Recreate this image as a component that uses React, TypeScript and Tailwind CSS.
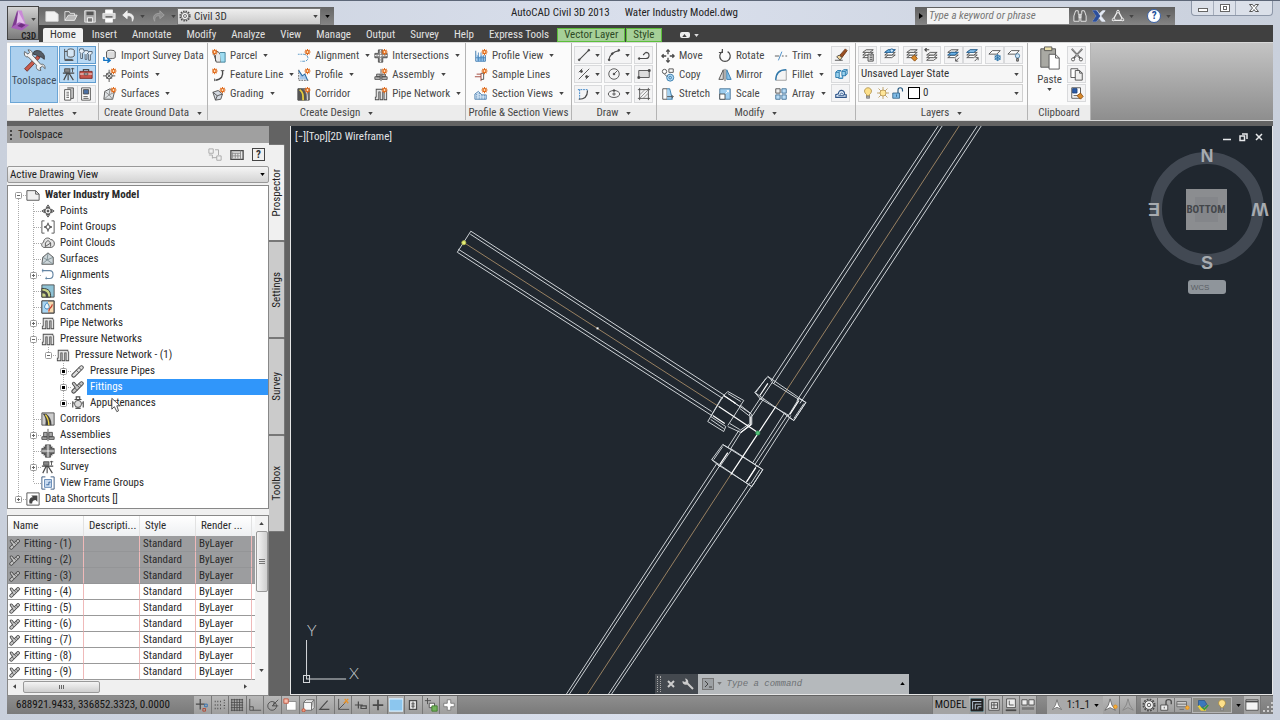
import { useState, type ReactNode } from "react";
import clsx from "clsx";

const spark = (
  <g stroke="#e06a1c" strokeWidth="1.200">
    <path d="M12 0v7M8.500 3.500h7M9.500 1l5 5M14.500 1l-5 5" />
    <circle cx="12" cy="3.500" r="1.700" fill="#ffe9c4" />
  </g>
);

const pipePair = (
  <>
    <path d="M1 13h3V4h10M8.500 4v11M13 4v11" stroke="#4a4a4a" strokeWidth="4" />
    <path d="M2 13h2V4h9M8.500 4v10M13 4v10" stroke="#e2e2e2" strokeWidth="2" />
  </>
);

const fittingShape = (
  <>
    <path d="m3 13 9-9" stroke="#444" strokeWidth="5" strokeLinecap="round" />
    <path d="m3 4 4 5" stroke="#444" strokeWidth="4" strokeLinecap="round" />
    <path d="m3 13 9-9" stroke="#c4c4c4" strokeWidth="3" strokeLinecap="round" />
    <path d="m3 4 4 5" stroke="#c4c4c4" strokeWidth="2" strokeLinecap="round" />
    <path d="m9 4 3 3M4 9l3 3M7 6l3 3" />
  </>
);

const layerStack = (
  <>
    <path d="m2 11 4-3h8l-4 3z" fill="#fff" />
    <path d="m2 8 4-3h8l-4 3z" fill="#fff" />
    <path d="m2 5 4-3h8l-4 3z" fill="#eee" />
  </>
);

const icons: Record<string, ReactNode> = {
  import: (
    <>
      <ellipse cx="9" cy="3.500" rx="5" ry="2.200" fill="#eee" />
      <path d="M4 3.500v6c0 2 10 2 10 0v-6" fill="#dcdcdc" />
      <path d="M1 9v4h6M5 10.500l3 2.500-3 2.500" stroke="#1374c4" strokeWidth="1.700" />
    </>
  ),
  pointsNew: (
    <>
      <circle cx="7" cy="9" r="3.500" fill="#ddd" />
      <path d="M7 2v4M7 12v4M0 9h4M10 9h4M4 6l6 6M10 6l-6 6" />
      {spark}
    </>
  ),
  surfaceNew: (
    <>
      <path d="m1 14 1-9 6-3 5 4-2 8z" fill="#dfe3e6" />
      <path d="m2 5 5 4 1-7M7 9l6-3M7 9l4 5M7 9l-6 5" stroke="#888" />
      {spark}
    </>
  ),
  parcel: (
    <>
      <path d="M1 3h6l3 4v8H5z" fill="#e8e8e8" />
      <path d="M9 4h6v11h-5" fill="#9edcf1" stroke="#3b7a94" />
      <path d="M4 7v7" />
      <g transform="translate(-9)">{spark}</g>
    </>
  ),
  featureLine: (
    <>
      <path d="M12 3c1 6-1 10-8 11" strokeWidth="1.600" />
      <path d="M10 3h4M3 12v3" />
      <g transform="translate(-9)">{spark}</g>
    </>
  ),
  grading: (
    <>
      <path d="M1 6 7 4l5 4-2 6-6 1z" fill="#d5dae2" />
      <path d="m1 6 5 4 6-2M6 10l-2 5" />
      {spark}
    </>
  ),
  alignment: (
    <>
      <path d="M1 6h7" stroke="#4a90c2" strokeDasharray="2 1" />
      <path d="M8 6c6 1 6 8 0 8H4" stroke="#4a90c2" strokeDasharray="3 1" />
      {spark}
    </>
  ),
  profile: (
    <>
      <path d="M2 2v12h12" strokeDasharray="2 1" />
      <path d="M3 6v7h8L9 8 6 10z" fill="#a6c8ec" stroke="none" />
      <path d="M2 3 6 9l3-2 3 7" stroke="#2b6da8" strokeWidth="1.300" />
      {spark}
    </>
  ),
  corridor: (
    <>
      <path d="M1 2h13v13H1z" fill="#777" />
      <path d="M1 2h4c5 2 6 6 5 13H1z" fill="#555" stroke="none" />
      <path d="M3 3c4 3 4 6 4 12" stroke="#e8cf3c" strokeWidth="2" />
      <path d="M9 3c3 3 3 7 3 12" stroke="#ddd" />
      {spark}
    </>
  ),
  intersection: (
    <>
      <path d="M5 1h5v4h5v5h-5v5H5v-5H1V5h4z" fill="#8a8a8a" />
      <path d="M7.500 1v14M1 7.500h14" stroke="#fff" strokeDasharray="2 1" />
      {spark}
    </>
  ),
  assembly: (
    <>
      <path d="M8 1v14" />
      <path d="M1 10h6v3H1zM9 10h6v3H9zM3 7h4v3H3zM9 7h4v3H9z" fill="#bbb" />
      {spark}
    </>
  ),
  pipeNew: (
    <>
      {pipePair}
      {spark}
    </>
  ),
  profileView: (
    <>
      <path d="M2 2v12h11V7" stroke="#2f6ea6" />
      <path d="M3 6l3 3 3-2 3 2v5H3z" fill="#86b9e6" stroke="none" />
      <path d="M5 4v10M8 4v10M11 7v7M2 10h11" stroke="#4a84b8" />
      {spark}
    </>
  ),
  sampleLine: (
    <>
      <path d="M1 10h7v5M8 10V6M3 7h5" stroke="#9b3b2f" />
      <path d="M8 6h3v7H8" />
      {spark}
    </>
  ),
  sectionView: (
    <>
      <path d="M1 14V8l4-3 4 4h5v5z" fill="#cfe2f3" stroke="#4d7fae" />
      <path d="M3 8v6M6 7v7M9 9v5M12 9v5" stroke="#4d7fae" strokeDasharray="1 1" />
      {spark}
    </>
  ),
  line: (
    <>
      <path d="M3 13 13 3" strokeWidth="1.300" />
      <circle cx="2.500" cy="13.500" r="1" fill="#444" />
      <circle cx="13.500" cy="2.500" r="1" fill="#444" />
    </>
  ),
  arc: (
    <>
      <path d="M2 14C3 8 7 4 14 3" strokeWidth="1.300" />
      <circle cx="2.500" cy="13.500" r="1" fill="#444" />
      <circle cx="6" cy="6.500" r="1" fill="#444" />
      <circle cx="13.500" cy="2.500" r="1" fill="#444" />
    </>
  ),
  polyline: (
    <>
      <path d="M2 12h8c5 0 5-7 0-7M10 5l-3 3" strokeWidth="1.300" />
      <circle cx="2.500" cy="12" r="1" fill="#444" />
    </>
  ),
  percent: (
    <>
      <path d="M2 14 14 2M2 6l4-4M10 14l4-4" />
      <circle cx="5" cy="5" r="1.200" fill="#444" />
      <circle cx="11" cy="11" r="1.200" fill="#444" />
    </>
  ),
  circle: (
    <>
      <circle cx="8" cy="8" r="6" />
      <path d="m8 8 4-4" />
      <circle cx="8" cy="8" r="1" fill="#444" />
    </>
  ),
  rect: (
    <>
      <path d="M2 4h12v8H2z" fill="#ddd" />
      <path d="M1 11h2v2H1zM13 3h2v2h-2z" fill="#444" />
    </>
  ),
  curve: (
    <>
      <path d="M1 3h11v3M3 3v11" stroke="#2b7bc4" strokeDasharray="2 1" />
      <path d="M2 14c7 0 10-3 10-10" strokeWidth="1.400" />
    </>
  ),
  ellipse: (
    <>
      <ellipse cx="8" cy="8" rx="6.500" ry="4" />
      <path d="M8 6v4M6 8h4" />
      <circle cx="8" cy="4" r="1" fill="#444" />
    </>
  ),
  hatch: (
    <>
      <path d="M3 1v14M13 1v14M1 3h14M1 13h14" />
      <path d="m3 9 6-6M3 13 13 3M7 13l6-6" stroke="#888" />
    </>
  ),
  move: (
    <path d="M8 1v5M8 10v5M1 8h5M10 8h5M6 3l2-2 2 2M6 13l2 2 2-2M3 6 1 8l2 2M13 6l2 2-2 2" strokeWidth="1.500" />
  ),
  copy: (
    <>
      <circle cx="4" cy="4" r="2.500" fill="#fff" />
      <circle cx="10.500" cy="11" r="4" fill="#b9dcf5" stroke="#2e76a8" />
      <circle cx="10.500" cy="11" r="1.500" stroke="#2e76a8" />
      <path d="M9 1h5v4H9z" />
      <path d="m4 7 3 3" />
    </>
  ),
  stretch: (
    <>
      <path d="M2 2h5v12H2z" fill="#fff" />
      <path d="M7 2h3l3 12H7" fill="#a8d4f2" stroke="#2e76a8" />
      <path d="M7 11h7M12 9l2 2-2 2" />
    </>
  ),
  rotate: <path d="M11 3a6 6 0 1 1-6 0M5 0v4H1" strokeWidth="1.400" />,
  mirror: (
    <>
      <path d="M6 2v11H1z" fill="#ddd" />
      <path d="M10 2v11h5z" fill="#8cc4ec" stroke="#2e76a8" />
      <path d="M8 1v14" />
    </>
  ),
  scale: (
    <>
      <path d="M2 2h12v12H2z" fill="#9dcdf0" stroke="#4a7698" />
      <path d="M2 8h6v6H2z" fill="#fff" />
      <path d="m9 7 3-3M10 4h2v2" stroke="#fff" />
    </>
  ),
  trim: (
    <>
      <path d="M1 8h5M9 8h2M13 8h2" />
      <path d="M5 13 9 3" stroke="#3a86c6" />
    </>
  ),
  fillet: (
    <>
      <path d="M2 14C2 6 6 2 14 2v12z" fill="#f4f4f4" stroke="none" />
      <path d="M14 2v12H2" stroke="#999" />
      <path d="M2 14C2 6 6 2 14 2" stroke="#2e76a8" strokeWidth="1.500" />
    </>
  ),
  array: (
    <>
      <path d="M2 2h5v5H2z" fill="#eee" />
      <path d="M9 2h5v5H9zM2 9h5v5H2zM9 9h5v5H9z" fill="#b9dcf5" stroke="#3c6d92" />
    </>
  ),
  erase: (
    <>
      <path d="m6 9 7-8 2 2-6 8z" fill="#9a4f22" stroke="#6b3718" />
      <path d="m3 10 3-2 3 3-2 3z" fill="#f1d49a" />
      <path d="M1 14h9" />
    </>
  ),
  explode: (
    <path d="M2 6h4v6H2zM2 6l2-2h4L6 6M9 5h4v5H9zM9 5l2-2h4l-2 2M13 10l2-2V3M5 13h5v-3" fill="#9bd3ef" stroke="#2273a8" />
  ),
  offset: (
    <>
      <path d="M2 13h12v-3h-2c1-6-7-7-7-1l-3 1z" fill="#dbe9f6" stroke="#30568a" strokeWidth="1.300" />
      <path d="M5 11h6c0-3-4-4-4-1" stroke="#30568a" />
    </>
  ),
  layerProps: (
    <>
      {layerStack}
      <path d="M8 7h6v8H8z" fill="#ddd" />
      <path d="M10 9h3M10 11h3M10 13h3" />
    </>
  ),
  layerOn: (
    <>
      {layerStack}
      <path d="m2 5 4-3h8l-4 3z" fill="#6db4e8" stroke="#22659c" />
      <circle cx="10" cy="3" r="2" fill="#cde6f9" stroke="#22659c" />
    </>
  ),
  layerMatch: (
    <>
      {layerStack}
      <path d="m7 11 4-3 3 4-3 3z" fill="#d98a2b" stroke="#8c4f14" />
    </>
  ),
  layerPrev: (
    <>
      <g transform="translate(1 3)">{layerStack}</g>
      <path d="M6 2H1M3 0 1 2l2 2" strokeWidth="1.300" />
    </>
  ),
  layerIso: (
    <>
      {layerStack}
      <path d="m2 8 4-3h8l-4 3z" fill="#6db4e8" stroke="#22659c" />
      <path d="m15 11-4 4M11 12v3h3" />
    </>
  ),
  layerUniso: (
    <>
      {layerStack}
      <path d="m2 5 4-3h8l-4 3z" fill="#8fc4ec" stroke="#22659c" />
      <path d="m11 15 4-4M12 11h3v3" />
    </>
  ),
  layerFreeze: (
    <>
      <path d="m1 7 4-4h9l-4 4z" fill="#fff" />
      <circle cx="11" cy="11" r="3" fill="#b7dcf5" stroke="#2a70a5" />
      <path d="M11 7v8M7.500 9l7 4M14.500 9l-7 4" stroke="#2a70a5" />
    </>
  ),
  layerOff: (
    <>
      <path d="m1 7 4-4h9l-4 4z" fill="#fff" />
      <circle cx="12" cy="9" r="2.500" fill="#cfe4f5" stroke="#4a7ba0" />
      <path d="M11 12h2v3h-2z" fill="#aaa" />
    </>
  ),
  bulb: (
    <>
      <path d="M6 10C1 6 4 1 8 1s7 5 2 9v2H6z" fill="#fde08a" stroke="#a8883c" />
      <path d="M6 12h4v3H6z" fill="#aaa" stroke="#777" />
    </>
  ),
  sun: (
    <>
      <path d="M8 0v16M0 8h16M2 2l12 12M14 2 2 14" stroke="#b08e4a" />
      <circle cx="8" cy="8" r="4" fill="#ffe698" stroke="#b08e4a" />
    </>
  ),
  unlock: (
    <>
      <path d="M1 8h9v7H1z" fill="#7fbbe6" stroke="#24577f" />
      <path d="M8 8V4c0-4 6-4 6 0v2" stroke="#24577f" strokeWidth="1.500" />
      <path d="M6 10v3" stroke="#24577f" />
    </>
  ),
  cut: (
    <>
      <path d="m2 1 10 11M14 1 4 12" stroke="#555" strokeWidth="2" />
      <path d="m2 1 8 9M14 1l-8 9" stroke="#ddd" strokeWidth="0.700" />
      <circle cx="3.500" cy="13" r="1.800" fill="#fff" />
      <circle cx="12.500" cy="13" r="1.800" fill="#fff" />
    </>
  ),
  pages: (
    <>
      <path d="M1 2h8v10H1z" fill="#fff" />
      <path d="M6 4h5l3 3v8H6z" fill="#eee" />
      <path d="M11 4v3h3" />
    </>
  ),
  matchProps: (
    <>
      <path d="M2 2h10v12H2z" fill="#fff" />
      <path d="M3 3h5v5H3z" fill="#2a5ba8" stroke="#1f447e" />
      <path d="M4 11h5" />
      <path d="m8 11 4-3 3 4-3 3z" fill="#d98a2b" stroke="#8c4f14" />
    </>
  ),
  prospector: (
    <>
      <path d="M3 1v12h9M3 4h3" />
      <ellipse cx="10" cy="3" rx="4" ry="2" fill="#d5e6f5" />
      <path d="M6 3v6c1 2 7 2 8 0V3" fill="#d5e6f5" />
      <path d="M3 14h10" strokeWidth="1.500" />
    </>
  ),
  settings: (
    <path d="M1 1h4l1 3-2 2v6H2V6L0 4zM6 3h4l1 2-2 2v6H7V7M11 4h4v2l-2 2v6h-2V7" fill="#e8f0f8" stroke="#4a5a6a" />
  ),
  tripod: (
    <>
      <path d="M3 2h6v4H3z" fill="#888" />
      <path d="M1 7h13M6 7 2 15M7 7v8M8 7l5 8" strokeWidth="1.300" />
      <path d="M10 2h4M12 1v5" />
    </>
  ),
  toolbox: (
    <>
      <path d="M5 5V3h6v2" strokeWidth="1.400" />
      <path d="M1 5h14v8H1z" fill="#c7544c" stroke="#7c2b26" />
      <path d="M1 8h14" stroke="#fff" />
      <path d="M6 7h4v2H6z" fill="#eee" />
    </>
  ),
  calc: (
    <>
      <path d="M6 1h7v12h-3" fill="#ccc" />
      <path d="M3 3h7v12H3z" fill="#fff" />
      <path d="M5 6h3M5 8h3M5 10h3M5 12h3" stroke="#666" />
    </>
  ),
  sheet: (
    <>
      <path d="M3 1h10v14H3z" fill="#fff" />
      <path d="M5 3h6v5H5z" fill="#4a6fa3" />
      <path d="M5 11h5M5 13h6" />
    </>
  ),
  newFile: <path d="M1 3h10l4 3v8H1z" fill="#f2f2f2" stroke="#ddd" />,
  open: (
    <>
      <path d="M1 13V3h5l1 2h5v3" stroke="#e8e8e8" />
      <path d="m1 13 4-6h10l-3 6z" fill="#b8b8b8" stroke="#eee" />
    </>
  ),
  save: (
    <>
      <path d="M2 2h12v13H2z" fill="#aaa" stroke="#eee" />
      <path d="M4 3h8v4H4z" fill="#555" stroke="none" />
      <path d="M5 10h6v5H5z" fill="#777" stroke="#fff" />
    </>
  ),
  print: (
    <>
      <path d="M4 1h8v4H4zM4 10h8v5H4z" fill="#fff" stroke="#eee" />
      <path d="M1 5h14v6H1z" fill="#d5d5d5" stroke="#eee" />
      <path d="M4 9h8" stroke="#555" strokeWidth="1.500" />
    </>
  ),
  undo: <path d="M7 2 2 7l5 4V8c4-1 6 1 6 6 3-6 0-9-6-9z" fill="#eee" stroke="#eee" />,
  redo: <path d="m9 2 5 5-5 4V8c-4-1-6 1-6 6-3-6 0-9 6-9z" fill="#8d8d8d" stroke="#a2a2a2" />,
  gear: (
    <>
      <circle cx="8" cy="8" r="6.500" strokeDasharray="2 1.400" strokeWidth="2" />
      <circle cx="8" cy="8" r="5" fill="#f2f2f2" />
      <circle cx="8" cy="8" r="2" />
    </>
  ),
  binoculars: (
    <path d="M3 2h3v3l1 2v7H1V8zM10 2h3l2 6v6H9V7l1-2zM7 6h2v4H7z" fill="#666" stroke="#f0f0f0" />
  ),
  exchange: (
    <>
      <path d="M1 2h5l2 4 4-4h3l-5 6 5 6h-4l-3-4-3 4H1l4-6z" fill="#e7edf7" stroke="#dfe6f2" />
      <path d="M1 2h4l4 6-4 6H1l4-6z" fill="#2b4e9b" stroke="#2b4e9b" />
    </>
  ),
  autodesk360: (
    <>
      <path d="m8 2 6 11H2z" stroke="#eee" strokeWidth="1.500" />
      <circle cx="8" cy="3" r="1.500" fill="#888" stroke="#eee" />
      <circle cx="3" cy="12" r="1.500" fill="#888" stroke="#eee" />
      <circle cx="13" cy="12" r="1.500" fill="#888" stroke="#eee" />
    </>
  ),
  doc: (
    <>
      <path d="M1 3h10l4 4v7H1z" fill="#f0f0f0" />
      <path d="M11 3v4h4" />
    </>
  ),
  point: (
    <>
      <circle cx="8" cy="8" r="3.500" fill="#eee" />
      <path d="m8 1 2 3H6zM8 15l2-3H6zM1 8l3-2v4zM15 8l-3-2v4z" fill="#bbb" />
      <circle cx="8" cy="8" r="1" fill="#444" />
    </>
  ),
  pointGroup: (
    <>
      <path d="M4 1H1v14h3M12 1h3v14h-3" />
      <circle cx="8" cy="8" r="2.500" />
      <path d="M8 3v3M8 10v3M3.500 8h3M9.500 8h3" strokeWidth="1.500" />
    </>
  ),
  pointCloud: (
    <>
      <path d="M3 13C0 12 0 8 3 7c0-5 6-6 8-3 5 0 6 8 1 9z" fill="#e5e5e5" />
      <path d="M5 12V8l3-3 3 3-3 2zM11 8v4" />
    </>
  ),
  surface: (
    <>
      <path d="m1 14 1-8 6-5 6 5v8z" fill="#cdd6da" />
      <path d="m8 1-1 8-6 5M7 9l7-3M7 9l7 5M2 6l5 3" stroke="#7b8b90" />
    </>
  ),
  alignmentRow: (
    <>
      <path d="M1 3h9c5 0 5 9 0 9H5" stroke="#6485a3" strokeWidth="1.300" />
      <path d="M2 1v4M6 10v3" stroke="#6485a3" />
    </>
  ),
  site: (
    <>
      <path d="M1 1h14v14H1z" fill="#8fc3d6" />
      <path d="M1 5c9 0 10 4 10 10H1z" fill="#c9d487" stroke="#333" />
      <path d="M1 9c5 0 6 2 6 6" strokeWidth="3" />
    </>
  ),
  catchment: (
    <>
      <path d="M1 1h14v14H1z" fill="#f5d9ae" />
      <path d="M1 1h7v14H1z" fill="#a8d5f2" stroke="none" />
      <path d="M7 3c-6 6-1 8 1 7s2-3-1-7z" fill="#e7f6ff" stroke="#2a76b4" />
      <path d="M9 13c0-5 3-3 4-8" stroke="#c43d2e" strokeWidth="1.400" />
      <path d="M1 1h14v14H1z" />
    </>
  ),
  pipes: pipePair,
  pressurePipe: (
    <>
      <path d="m3 13 9-9" stroke="#444" strokeWidth="5" strokeLinecap="round" />
      <path d="m3 13 9-9" stroke="#ddd" strokeWidth="3" strokeLinecap="round" />
      <path d="m6 7 3 3M9 4l3 3" />
    </>
  ),
  fitting: fittingShape,
  appurtenance: (
    <>
      <path d="M4 4h8M6 1h4v3H6zM2 6v7M14 6v7M2 8h2M12 8h2" strokeWidth="1.300" />
      <circle cx="8" cy="9" r="4" fill="#ddd" />
      <path d="M5 14h6" strokeWidth="1.500" />
    </>
  ),
  corridorRow: (
    <>
      <path d="M1 1h14v14H1z" fill="#ccc" />
      <path d="M2 2h4c4 3 6 7 6 13H5C6 9 5 5 2 2z" fill="#444" stroke="none" />
      <path d="M5 3c3 4 4 7 4 12" stroke="#f0d642" strokeWidth="1.500" />
    </>
  ),
  assemblyRow: (
    <>
      <path d="M8 1v14" />
      <path d="M1 10h6v3H1zM9 10h6v3H9zM3 5h4v5H3zM9 5h4v5H9z" fill="#aaa" />
    </>
  ),
  intersectionRow: (
    <>
      <path d="M5 1h6v4h4v6h-4v4H5v-4H1V5h4z" fill="#777" />
      <path d="M8 1v14M1 8h14" stroke="#fff" />
      <path d="m3 3 2 2M13 3l-2 2M3 13l2-2M13 13l-2-2" strokeWidth="1.500" />
    </>
  ),
  viewFrame: (
    <>
      <path d="M5 1H1v14h4M11 1h4v14h-4" stroke="#2f4f78" />
      <path d="M4 4h8v9H4z" fill="#c7daf0" stroke="#5c83b3" />
      <path d="M6 10h3V7h2" stroke="#2f5d94" />
    </>
  ),
  shortcut: (
    <>
      <path d="M1 1h14v14H1z" fill="#fff" />
      <path d="M4 13c-1-5 1-7 4-7L6 4h7v7l-2-2c-2 0-4 1-4 4z" fill="#444" stroke="none" />
    </>
  ),
  infer: (
    <>
      <path d="M6 1v12M1 7h10" strokeWidth="1.500" />
      <path d="M11 7h3v3h-3z" stroke="#2f6fb0" />
      <path d="M9 12h3v3H9z" stroke="#b5452f" />
    </>
  ),
  snap: <path d="M2 4h9M2 8h9M2 12h9M13 2v12" strokeDasharray="1 2" strokeWidth="1.500" />,
  grid: <path d="M2 1v14M5 1v14M8 1v14M11 1v14M14 1v14M1 2h14M1 5h14M1 8h14M1 11h14M1 14h14" />,
  ortho: <path d="M2 1v13h13M2 10h4v4" />,
  polar: (
    <>
      <circle cx="7" cy="9" r="5" />
      <path d="m7 9 7-7M7 9h7M9 5v4" />
    </>
  ),
  osnap: (
    <>
      <path d="M4 4h11v10H4z" fill="#fff" stroke="#888" />
      <path d="M1 1h5v5H1z" fill="#f6c0b0" stroke="#c4523c" />
    </>
  ),
  osnap3d: (
    <>
      <path d="M3 5h9v9H3zM3 5l3-3h9l-3 3M15 2v9l-3 3" fill="#f8f8f8" stroke="#666" />
      <circle cx="3" cy="14" r="1.800" fill="#f09a7c" stroke="#c4523c" />
    </>
  ),
  otrack: <path d="M11 3 2 13h11" strokeWidth="1.300" />,
  ducs: (
    <>
      <path d="M3 1v12h12M3 13l8-8" />
      <path d="M9 6l5-5M10 1l4 5" stroke="#e7932a" strokeWidth="1.500" />
    </>
  ),
  dyn: <path d="M1 8h9M5 4v8M8 9h6v3H8z" strokeWidth="1.400" />,
  lwt: <path d="M8 2v12M2 8h12" strokeWidth="2" />,
  tpy: <path d="M0 1h16v14H0z" fill="#8cc6ee" stroke="#d9f0ff" strokeWidth="1.500" />,
  quickProps: (
    <>
      <path d="M4 3h8v10H4z" fill="#fff" strokeWidth="1.500" />
      <path d="M6 6h4M6 8h4M6 10h4M8 4v8" />
    </>
  ),
  cycling: (
    <>
      <path d="M4 0v7M1 3h7M6 6h6v5H6z" fill="#fff" />
      <path d="M9 9h6v6H9z" fill="#72b35b" stroke="#3e7a2b" />
    </>
  ),
  plus: <path d="M6 2h4v4h4v4h-4v4H6v-4H2V6h4z" fill="#fff" stroke="#777" />,
  model: (
    <>
      <path d="M0 0h16v16H0z" fill="#222" stroke="#a9dbe8" />
      <path d="M3 13V4h10M6 13V7h7M9 13v-3h4" stroke="#cde" />
    </>
  ),
  layout: (
    <>
      <path d="M2 2h12v12H2z" fill="#ddd" />
      <path d="M5 5h7v7H5zM5 8h7M8 5v7" />
    </>
  ),
  quickLayout: (
    <>
      <path d="M3 1h10v10H3z" fill="#eee" />
      <path d="M2 14h12" strokeWidth="2" />
      <path d="M6 3v5h5" />
    </>
  ),
  quickDrawing: (
    <>
      <path d="M1 2h6v6H1zM9 2h6v6H9z" fill="#eee" />
      <path d="M1 12h14" strokeWidth="3" stroke="#777" />
    </>
  ),
  scaleA: <path d="m8 1 2 7 4 6-6-3-6 3 4-6z" fill="#fff" stroke="#666" />,
  scaleSpark: (
    <>
      <path d="m7 1 2 7 4 6-6-3-6 3 4-6z" fill="#fff" stroke="#666" />
      <circle cx="13" cy="10" r="2" fill="#f4b13c" stroke="#e58f1f" />
    </>
  ),
  scaleDim: <path d="m8 1 2 7 4 6-6-3-6 3 4-6z" fill="#aaa" stroke="#858585" />,
  lockOpen: (
    <>
      <path d="M2 8h8v6H2z" fill="#eee" />
      <path d="M8 8V4c0-3 6-3 6 0v3" strokeWidth="1.500" />
      <path d="M6 10v2" />
    </>
  ),
  hardware: (
    <>
      <path d="M1 4h11v6H1z" fill="#ccc" stroke="#666" />
      <path d="M1 7h11M4 13h5" stroke="#666" />
      <circle cx="13" cy="11" r="2" fill="#f4b13c" stroke="#e58f1f" />
    </>
  ),
  tray: (
    <>
      <path d="M2 2h8l3 5-5 4H2z" fill="#3b78bd" stroke="#28538a" />
      <path d="m2 9 4 5h6" stroke="#efd13a" strokeWidth="3" />
      <path d="m7 11 3 3 5-6" stroke="#2f9b41" strokeWidth="2" />
    </>
  ),
  window: (
    <>
      <path d="M1 2h14v12H1z" fill="#f4f4f4" />
      <path d="M1 4h14" strokeWidth="2" />
    </>
  ),
  panorama: (
    <>
      <path d="M1 3h14v10H1z" fill="#e6e6e6" strokeWidth="1.500" />
      <path d="M3 5v7M1 6h11M1 9h11M12 3v10M6 6v6M9 6v6" stroke="#888" />
    </>
  ),
  treeToggle: (
    <path d="M1 1h5v5H1zM1 8h4v4M10 9h5v5h-5zM5 11h5M8 2h4v6" stroke="#a5a5a5" />
  ),
};

function Icon({ name, size = "md" }: { name: string; size?: "sm" | "md" }) {
  return (
    <svg
      viewBox="0 0 16 16"
      fill="none"
      stroke="#4a4a4a"
      strokeWidth="1"
      aria-hidden="true"
      className={clsx("shrink-0", size === "sm" ? "h-3 w-3" : "h-3.5 w-3.5")}
    >
      {icons[name]}
    </svg>
  );
}

function Caret({ className }: { className?: string }) {
  return (
    <svg viewBox="0 0 6 4" aria-hidden="true" className={clsx("h-[3px] w-[5px] shrink-0", className ?? "fill-[#444]")}>
      <path d="M0 0h6L3 4z" />
    </svg>
  );
}

function Tool({ icon, label, menu }: { icon: string; label: string; menu?: boolean }) {
  return (
    <button type="button" className="flex h-[19px] items-center gap-1 whitespace-nowrap text-[#484848]">
      <Icon name={icon} />
      {label}
      {menu ? <Caret className="ml-0.5 fill-[#444]" /> : null}
    </button>
  );
}

function SmallButton({ icon, label, active, menu }: { icon: string; label: string; active?: boolean; menu?: boolean }) {
  return (
    <button
      type="button"
      aria-label={label}
      className={clsx(
        "flex h-[18px] items-center justify-center border",
        menu ? "w-7 gap-1" : "w-[19px]",
        active ? "border-[#5f9ccf] bg-[#b9d9f4]" : "border-[#d9dadc] bg-[#f4f4f5]",
      )}
    >
      <Icon name={icon} />
      {menu ? <Caret /> : null}
    </button>
  );
}

function Panel({ title, menu, className, children }: { title: string; menu?: boolean; className?: string; children: ReactNode }) {
  return (
    <section className={clsx("flex shrink-0 flex-col border-r border-[#b4b4b4] bg-[#fbfbfb]", className)}>
      <div className="flex h-[62px] gap-1 px-1 pt-[3px]">{children}</div>
      <h2 className="flex h-[15px] items-center justify-center gap-1.5 whitespace-nowrap bg-[#ececec] text-[#484848]">
        {title}
        {menu ? <Caret className="mt-px ml-0.5 fill-[#444]" /> : null}
      </h2>
    </section>
  );
}

const tabs = ["Home", "Insert", "Annotate", "Modify", "Analyze", "View", "Manage", "Output", "Survey", "Help", "Express Tools"];

function TitleBar() {
  return (
    <div className="flex h-[25px] items-end">
      <div className="flex h-[18px] w-[295px] shrink-0 items-center bg-linear-to-b from-[#666] to-[#858585] pl-1.5">
        <div className="flex flex-1 items-center gap-[5px]">
          {["newFile", "open", "save", "print", "undo"].map((name) => (
            <button key={name} type="button" aria-label={name}>
              <Icon name={name} />
            </button>
          ))}
          <Caret />
          <button type="button" aria-label="redo" className="ml-0.5">
            <Icon name="redo" />
          </button>
          <Caret />
        </div>
        <div className="relative h-[17px] w-[144px]">
          <select aria-label="Workspace" className="h-full w-full appearance-none border border-[#777] bg-linear-to-b from-[#eee] to-[#ccc] pl-4 text-[#333]">
            <option>Civil 3D</option>
          </select>
          <span className="pointer-events-none absolute top-[2px] left-[2px]">
            <Icon name="gear" size="sm" />
          </span>
          <Caret className="pointer-events-none absolute top-[7px] right-[3px] fill-[#444]" />
        </div>
        <button type="button" aria-label="Customize toolbar" className="flex h-full w-[13px] items-center justify-center">
          <Caret className="fill-black" />
        </button>
      </div>
      <h1 className="flex h-6 flex-1 items-center justify-center gap-[15px] text-[#222]">
        <span>AutoCAD Civil 3D 2013</span>
        <span>Water Industry Model.dwg</span>
      </h1>
      <div className="flex h-[18px] w-[260px] shrink-0 items-center bg-linear-to-b from-[#606060] to-[#858585]">
        <button type="button" aria-label="Collapse search" className="flex w-3 items-center justify-center">
          <svg viewBox="0 0 4 6" className="h-1.5 w-1">
            <path d="M0 0v6l4-3z" />
          </svg>
        </button>
        <input
          type="text"
          aria-label="Search help"
          placeholder="Type a keyword or phrase"
          className="h-4 w-[142px] bg-[#f3f3f3] px-0.5 italic placeholder:text-[#777]"
        />
        <div className="flex flex-1 items-center justify-between px-1">
          <button type="button" aria-label="Find">
            <Icon name="binoculars" />
          </button>
          <button type="button" aria-label="Exchange">
            <Icon name="exchange" />
          </button>
          <button type="button" aria-label="Autodesk 360">
            <Icon name="autodesk360" />
          </button>
          <Caret />
          <button type="button" className="ml-2 h-3.5 w-3.5 rounded-full border border-[#3a62a8] bg-white leading-3 font-bold text-[#23509c]">
            ?
          </button>
          <Caret />
        </div>
      </div>
      <div className="ml-4 flex h-[16px] w-[82px] shrink-0 self-start rounded-b border border-t-0 border-[#8d97a8] bg-[#dbe0e9]">
        <button type="button" aria-label="Minimize" className="flex w-[22px] items-center justify-center border-r border-[#a5adbb]">
          <span className="mt-1 h-1 w-2.5 border border-[#666] bg-white" />
        </button>
        <button type="button" aria-label="Restore" className="flex w-[22px] items-center justify-center border-r border-[#a5adbb]">
          <span className="flex h-2 w-2.5 items-center justify-center border border-[#666] bg-white">
            <span className="h-1 w-1 border border-[#666]" />
          </span>
        </button>
        <button type="button" aria-label="Close" className="flex flex-1 items-center justify-center">
          <svg viewBox="0 0 10 8" className="h-2 w-2.5 fill-white stroke-[#555]">
            <path d="M.5.5h3L5 2.500 6.500.5h3L6.500 4l3 3.500h-3L5 5.500l-1.500 2h-3l3-3.500z" />
          </svg>
        </button>
      </div>
    </div>
  );
}

function TabRow() {
  const [tab, setTab] = useState("Home");

  return (
    <nav className="flex h-[17px] items-end bg-[#404040] pl-1">
      {tabs.map((name) => (
        <button
          key={name}
          type="button"
          onClick={() => setTab(name)}
          className={clsx(
            "h-3.5 px-[7px] leading-3.5 whitespace-nowrap",
            tab === name ? "mr-0.5 rounded-t-xs bg-[#f2f2f2] px-2 text-[#333]" : "mr-px text-[#e2e2e2]",
          )}
        >
          {name}
        </button>
      ))}
      <div className="flex gap-px">
        <button type="button" className="h-3.5 border border-[#5cbf3b] bg-[#a6cf98] px-1.5 leading-3 whitespace-nowrap text-[#2d4a25]">
          Vector Layer
        </button>
        <button type="button" className="h-3.5 border border-[#5cbf3b] bg-[#a6cf98] px-1.5 leading-3 text-[#2d4a25]">
          Style
        </button>
      </div>
      <button type="button" aria-label="Minimize ribbon" className="ml-[18px] flex h-3.5 items-center gap-1">
        <span className="flex h-1.5 w-2.5 items-center justify-center rounded-xs bg-[#eee]">
          <Caret className="rotate-180 fill-[#444]" />
        </span>
        <Caret className="fill-[#ddd]" />
      </button>
    </nav>
  );
}

function Ribbon() {
  return (
    <div className="flex h-[79px] border-t border-b border-[#d8d8d8] bg-linear-to-b from-[#c4c4c4] to-[#8e8e8e]">
      <Panel title="Palettes" menu className="w-[92px]">
        <button type="button" className="-ml-px flex h-[57px] w-12 shrink-0 flex-col items-center border border-[#6ca6d6] bg-[#acd0ee] text-[#3f4e5c]">
          <svg viewBox="0 0 28 28" className="mt-0.5 h-6 w-6">
            <path d="M14 3c5-3 10 0 12 5v4l-4-3-3 1-2-3-4-1z" fill="#555d66" stroke="#333" />
            <path d="m18 8 3 2L6 26l-3-3z" fill="#c85a4c" stroke="#6d2c24" />
            <path d="m3 3 4 3 2-2-2-3c4 0 6 3 5 6l10 11c3-1 5 1 5 5l-3-3-3 2 1 3c-4 0-6-2-5-6L7 9C4 10 2 7 3 3z" fill="#f3f3f3" stroke="#555" />
          </svg>
          <span className="leading-4">Toolspace</span>
        </button>
        <div className="-ml-[3px] grid h-[57px] grid-cols-2 gap-y-px">
          <SmallButton icon="prospector" label="Prospector" active />
          <SmallButton icon="settings" label="Settings" active />
          <SmallButton icon="tripod" label="Survey" active />
          <SmallButton icon="toolbox" label="Toolbox" active />
          <SmallButton icon="calc" label="Calculator" />
          <SmallButton icon="sheet" label="Sheets" />
        </div>
      </Panel>
      <Panel title="Create Ground Data" menu className="w-[109px]">
        <div className="flex flex-col items-start">
          <Tool icon="import" label="Import Survey Data" />
          <Tool icon="pointsNew" label="Points" menu />
          <Tool icon="surfaceNew" label="Surfaces" menu />
        </div>
      </Panel>
      <Panel title="Create Design" menu className="w-[258px]">
        <div className="flex w-[81px] flex-col items-start">
          <Tool icon="parcel" label="Parcel" menu />
          <Tool icon="featureLine" label="Feature Line" menu />
          <Tool icon="grading" label="Grading" menu />
        </div>
        <div className="flex w-[75px] flex-col items-start">
          <Tool icon="alignment" label="Alignment" menu />
          <Tool icon="profile" label="Profile" menu />
          <Tool icon="corridor" label="Corridor" />
        </div>
        <div className="flex flex-col items-start">
          <Tool icon="intersection" label="Intersections" menu />
          <Tool icon="assembly" label="Assembly" menu />
          <Tool icon="pipeNew" label="Pipe Network" menu />
        </div>
      </Panel>
      <Panel title="Profile & Section Views" className="w-[106px]">
        <div className="ml-1 flex flex-col items-start">
          <Tool icon="profileView" label="Profile View" menu />
          <Tool icon="sampleLine" label="Sample Lines" />
          <Tool icon="sectionView" label="Section Views" menu />
        </div>
      </Panel>
      <Panel title="Draw" menu className="w-[85px]">
        <div className="-ml-0.5 grid h-[57px] grid-cols-[28px_28px_19px] gap-x-0.5 gap-y-px">
          <SmallButton icon="line" label="Line" menu />
          <SmallButton icon="arc" label="Arc" menu />
          <SmallButton icon="polyline" label="Polyline" />
          <SmallButton icon="percent" label="Point" menu />
          <SmallButton icon="circle" label="Circle" menu />
          <SmallButton icon="rect" label="Rectangle" />
          <SmallButton icon="curve" label="Curve" menu />
          <SmallButton icon="ellipse" label="Ellipse" menu />
          <SmallButton icon="hatch" label="Hatch" />
        </div>
      </Panel>
      <Panel title="Modify" menu className="w-[199px]">
        <div className="flex w-[53px] flex-col items-start">
          <Tool icon="move" label="Move" />
          <Tool icon="copy" label="Copy" />
          <Tool icon="stretch" label="Stretch" />
        </div>
        <div className="flex w-[52px] flex-col items-start">
          <Tool icon="rotate" label="Rotate" />
          <Tool icon="mirror" label="Mirror" />
          <Tool icon="scale" label="Scale" />
        </div>
        <div className="flex w-[53px] flex-col items-start">
          <Tool icon="trim" label="Trim" menu />
          <Tool icon="fillet" label="Fillet" menu />
          <Tool icon="array" label="Array" menu />
        </div>
        <div className="flex flex-col gap-px">
          <SmallButton icon="erase" label="Erase" />
          <SmallButton icon="explode" label="Explode" />
          <SmallButton icon="offset" label="Offset" />
        </div>
      </Panel>
      <Panel title="Layers" menu className="w-[172px]">
        <div className="-ml-0.5 flex flex-1 flex-col gap-px">
          <div className="flex justify-between">
            <SmallButton icon="layerProps" label="Layer properties" />
            <SmallButton icon="layerOn" label="Make current" />
            <div className="flex">
              <SmallButton icon="layerMatch" label="Match layer" />
              <SmallButton icon="layerPrev" label="Previous layer" />
            </div>
            <div className="flex">
              <SmallButton icon="layerIso" label="Isolate" />
              <SmallButton icon="layerUniso" label="Unisolate" />
            </div>
            <div className="flex">
              <SmallButton icon="layerFreeze" label="Freeze" />
              <SmallButton icon="layerOff" label="Off" />
            </div>
          </div>
          <div className="relative h-[18px]">
            <select aria-label="Layer state" className="h-full w-full appearance-none border border-[#d0d0d0] bg-[#f6f6f6] pl-0.5 text-[#333]">
              <option>Unsaved Layer State</option>
            </select>
            <Caret className="pointer-events-none absolute top-2 right-1 fill-[#444]" />
          </div>
          <div className="relative h-[18px]">
            <select aria-label="Layer" className="h-full w-full appearance-none border border-[#d0d0d0] bg-[#f6f6f6] pl-16 text-[#333]">
              <option>0</option>
            </select>
            <span className="pointer-events-none absolute top-[3px] left-1 flex gap-[3px]">
              <Icon name="bulb" size="sm" />
              <Icon name="sun" size="sm" />
              <Icon name="unlock" size="sm" />
              <span className="ml-px h-3 w-3 border border-black bg-white" />
            </span>
            <Caret className="pointer-events-none absolute top-2 right-1 fill-[#444]" />
          </div>
        </div>
      </Panel>
      <Panel title="Clipboard" className="w-[63px]">
        <button type="button" className="flex w-[35px] flex-col items-center pl-1 text-[#484848]">
          <svg viewBox="0 0 22 26" className="h-6 w-[22px]" stroke="#555">
            <path d="M1 3h16v20H1z" fill="#a9a9a3" />
            <path d="M5 1h8v4H5z" fill="#eadfa9" />
            <path d="M10 9h7l4 4v12H10z" fill="#fff" />
            <path d="M17 9v4h4" fill="none" />
          </svg>
          <span className="mt-0.5 leading-4">Paste</span>
          <Caret />
        </button>
        <div className="flex flex-col gap-px">
          <SmallButton icon="cut" label="Cut" />
          <SmallButton icon="pages" label="Copy to clipboard" />
          <SmallButton icon="matchProps" label="Match properties" />
        </div>
      </Panel>
    </div>
  );
}

type TreeRow = {
  label: string;
  icon: string;
  depth: number;
  box?: "plus" | "minus" | "dot";
  last?: boolean;
};

const tree: TreeRow[] = [
  { label: "Water Industry Model", icon: "doc", depth: 0, box: "minus" },
  { label: "Points", icon: "point", depth: 1 },
  { label: "Point Groups", icon: "pointGroup", depth: 1 },
  { label: "Point Clouds", icon: "pointCloud", depth: 1 },
  { label: "Surfaces", icon: "surface", depth: 1 },
  { label: "Alignments", icon: "alignmentRow", depth: 1, box: "plus" },
  { label: "Sites", icon: "site", depth: 1 },
  { label: "Catchments", icon: "catchment", depth: 1 },
  { label: "Pipe Networks", icon: "pipes", depth: 1, box: "plus" },
  { label: "Pressure Networks", icon: "pipes", depth: 1, box: "minus" },
  { label: "Pressure Network - (1)", icon: "pipes", depth: 2, box: "minus", last: true },
  { label: "Pressure Pipes", icon: "pressurePipe", depth: 3, box: "dot" },
  { label: "Fittings", icon: "fitting", depth: 3, box: "dot" },
  { label: "Appurtenances", icon: "appurtenance", depth: 3, box: "dot", last: true },
  { label: "Corridors", icon: "corridorRow", depth: 1 },
  { label: "Assemblies", icon: "assemblyRow", depth: 1, box: "plus" },
  { label: "Intersections", icon: "intersectionRow", depth: 1 },
  { label: "Survey", icon: "tripod", depth: 1, box: "plus" },
  { label: "View Frame Groups", icon: "viewFrame", depth: 1, last: true },
  { label: "Data Shortcuts []", icon: "shortcut", depth: 0, box: "plus", last: true },
];

function TreeBranch({ row }: { row: TreeRow }) {
  const top = row.label === "Water Industry Model" ? 8 : 0;
  return (
    <svg viewBox="0 0 15 16" className="h-4 w-[15px] shrink-0" fill="none" stroke="#aaa" aria-hidden="true">
      <path d={`M7.500 ${top}V${row.last ? 8 : 16}M8 8.500h7`} strokeDasharray="1 1" />
      {row.box ? <rect x="4.500" y="5.500" width="6" height="6" rx="1" fill="#fff" stroke="#999" /> : null}
      {row.box === "plus" || row.box === "minus" ? <path d="M6 8.500h3" stroke="#666" /> : null}
      {row.box === "plus" ? <path d="M7.500 7v3" stroke="#666" /> : null}
      {row.box === "dot" ? <path d="M6 7h3v3H6z" fill="#000" stroke="none" /> : null}
    </svg>
  );
}

function Tree() {
  const [selected, setSelected] = useState("Fittings");

  return (
    <ul className="relative h-[324px] shrink-0 overflow-hidden border border-[#888] bg-white py-px pl-[3px] text-[#2a2a2a]">
      {tree.map((row) => (
        <li key={row.label} className="flex h-4 items-center">
          {Array.from({ length: row.depth }, (_, level) => (
            <svg key={level} viewBox="0 0 15 16" className="h-4 w-[15px] shrink-0" stroke="#aaa" aria-hidden="true">
              {level < 2 ? <path d="M7.500 0v16" strokeDasharray="1 1" /> : null}
            </svg>
          ))}
          <TreeBranch row={row} />
          <Icon name={row.icon} />
          <button
            type="button"
            onClick={() => setSelected(row.label)}
            className={clsx(
              "ml-[2px] h-4 flex-1 pl-[3px] text-left leading-4",
              row.depth === 0 && row.box === "minus" && "font-bold",
              selected === row.label && "bg-[#3096fa] text-white",
            )}
          >
            {row.label}
          </button>
        </li>
      ))}
      <svg viewBox="0 0 12 18" className="pointer-events-none absolute top-[211px] left-[103px] h-4 w-2.5" aria-hidden="true">
        <path d="M1 1v13l3-3 3 6 2-1-2-6h4z" fill="#fff" stroke="#333" />
      </svg>
    </ul>
  );
}

function FittingTable() {
  const cell = "h-4 overflow-hidden border-r border-r-[#efb9b9] p-0 pl-[3px] whitespace-nowrap";
  return (
    <div className="mt-1.5 flex min-h-0 flex-1 flex-col border border-[#888] bg-[#f0f0f0]">
      <div className="flex min-h-0 flex-1">
        <div className="min-w-0 flex-1 overflow-hidden bg-white">
          <table className="w-full table-fixed border-separate border-spacing-0 text-[#2a2a2a]">
            <thead>
              <tr className="h-5 bg-linear-to-b from-white to-[#eef0f2]">
                <th className="w-[76px] border-r border-[#e2e2e2] p-0 pl-[5px] text-left font-normal">Name</th>
                <th className="w-[56px] border-r border-[#e2e2e2] p-0 pl-[5px] text-left font-normal">Descripti...</th>
                <th className="w-[56px] border-r border-[#e2e2e2] p-0 pl-[5px] text-left font-normal">Style</th>
                <th className="w-[56px] border-r border-[#e2e2e2] p-0 pl-[5px] text-left font-normal">Render ...</th>
                <th className="p-0" />
              </tr>
            </thead>
            <tbody>
              {[1, 2, 3, 4, 5, 6, 7, 8, 9].map((n) => (
                <tr key={n} className={n <= 3 ? "bg-[#9c9d9f]" : "bg-white"}>
                  {[`Fitting - (${n})`, "", "Standard", "ByLayer"].map((text, i) => (
                    <td key={i} className={clsx(cell, n > 3 ? "border-b border-b-[#999]" : "border-b border-b-[#949597]")}>
                      <span className="flex h-[15px] items-center gap-[3px]">
                        {i === 0 ? <span className="-ml-0.5 flex"><Icon name="fitting" size="sm" /></span> : null}
                        {text}
                      </span>
                    </td>
                  ))}
                  <td className="border-b border-b-[#999] p-0" />
                </tr>
              ))}
            </tbody>
          </table>
        </div>
        <div className="flex w-[13px] shrink-0 flex-col items-center justify-between bg-[#f3f3f3] pt-1.5 pb-1">
          <Caret className="rotate-180 fill-[#444]" />
          <div className="mt-1.5 flex h-[61px] w-3 flex-col items-center justify-center gap-px rounded-xs border border-[#999] bg-linear-to-r from-[#f4f4f4] to-[#cfcfcf]">
            <span className="h-px w-1.5 bg-[#777]" />
            <span className="h-px w-1.5 bg-[#777]" />
            <span className="h-px w-1.5 bg-[#777]" />
          </div>
          <div className="flex-1" />
          <Caret className="mb-1 fill-[#444]" />
        </div>
      </div>
      <div className="mb-0.5 flex h-[13px] shrink-0 items-center px-1">
        <Caret className="rotate-90 fill-[#444]" />
        <div className="ml-1.5 flex h-3 w-[77px] items-center justify-center gap-px rounded-xs border border-[#999] bg-linear-to-b from-[#f4f4f4] to-[#cfcfcf]">
          <span className="h-1 w-px bg-[#666]" />
          <span className="h-1 w-px bg-[#666]" />
          <span className="h-1 w-px bg-[#666]" />
        </div>
        <div className="flex-1" />
        <Caret className="mr-4 -rotate-90 fill-[#444]" />
      </div>
    </div>
  );
}

function Toolspace() {
  const [side, setSide] = useState("Prospector");

  return (
    <aside className="flex w-[283px] shrink-0 bg-[#636363]">
      <div className="flex w-[262px] shrink-0 flex-col bg-[#f0f0f0]">
        <div className="flex h-[17px] shrink-0 items-center gap-1.5 bg-[#a0a0a0] pl-[3px] text-[#222]">
          <span className="h-2.5 w-0.5 border-l-2 border-dotted border-[#444]" />
          Toolspace
        </div>
        <div className="flex h-[23px] shrink-0 items-center justify-end gap-2 pr-1">
          <button type="button" aria-label="Toggle tree"><Icon name="treeToggle" /></button>
          <button type="button" aria-label="Panorama"><Icon name="panorama" /></button>
          <button type="button" className="h-[13px] w-[13px] border border-[#444] text-center leading-[11px] font-bold text-[#333]">?</button>
        </div>
        <div className="relative mb-0.5 h-[17px] shrink-0">
          <select aria-label="View" className="h-full w-full appearance-none rounded-xs border border-[#999] bg-linear-to-b from-[#f5f5f5] to-[#d4d4d4] pl-0.5 text-[#222]">
            <option>Active Drawing View</option>
          </select>
          <Caret className="pointer-events-none absolute top-[7px] right-1 fill-black" />
        </div>
        <Tree />
        <FittingTable />
      </div>
      <div className="flex w-4 shrink-0 flex-col pt-[18px]">
        {["Prospector", "Settings", "Survey", "Toolbox"].map((name) => (
          <button
            key={name}
            type="button"
            onClick={() => setSide(name)}
            className={clsx(
              "flex h-[97px] items-center justify-center rounded-r-xs border border-l-0 border-[#777] text-[#222]",
              side === name ? "bg-[#f0f0f0]" : "bg-[#cbcbcb]",
            )}
          >
            <span className="rotate-180 leading-4 [writing-mode:vertical-rl]">{name}</span>
          </button>
        ))}
      </div>
    </aside>
  );
}

function Drawing() {
  return (
    <svg viewBox="291 127 981 567" preserveAspectRatio="xMinYMax slice" className="absolute inset-0 h-full w-full" fill="none" stroke="#dfe3e6" strokeWidth="0.900">
      <g stroke="#a58a66" strokeWidth="0.900">
        <path d="M587 694 730 475M775 407 958 127M463 243 718 407" />
      </g>
      <path d="M566 694 716 464M569 694 719 466M608 694 749 483M611 694 752 485" />
      <path d="M770 382 937 127M773 384 941 127M796 401 976 127M799 404 980 127" />
      <path d="m457 253 13.500-21L724 396M470 235l252 164M457 253l254 163M458 250l253 162" />
      {/* upper collar */}
      <path d="m767 377 38 26-12 18-39-28zM767 377l5 5-12 18-6-7M798 399l7 4-12 18-6-4zM765 379l-10 14M803 404l-10 15M771 383l27 17M759 399l29 17" />
      <path d="m767 384-8 12M798 401l-9 14" stroke="#fff" strokeWidth="1.200" />
      {/* lower collar */}
      <path d="m722 445 40 25-11 17-40-27zM722 445l9 5-12 17-8-7M756 466l6 4-11 17-6-4zM722 447l-9 13M759 470l-9 14M730 449l26 17M717 465l28 18" />
      <path d="m727 453-8 12M755 468l-9 14" stroke="#fff" strokeWidth="1.200" />
      {/* tee body */}
      <path d="m763 399-12 18M760 398l-12 18M740 433l-10 16M738 431l-11 17M787 415l-33 50M784 413l-32 50M790 416l-32 50" />
      {/* branch collar */}
      <path d="m727 392 16 9-4 6-16-11zM727 394l13 8M710 417l15 10-2 5-16-10zM710 420l13 9M723 396l-13 21M740 406l-13 20M721 398l-11 19" />
      <path d="m740 406 11 9v10l-11 8-13-6M739 409l9 7M729 424l10 6M733 403l17 11M749 415v9l-10 7" />
      <path d="m775 407-45 68M718 407l39 26M723 396l12 8M712 416l12 8M740 433l10-8v-8" stroke="#fff" strokeWidth="1.200" />
      <circle cx="757" cy="433.500" r="2" fill="#58c47c" stroke="#2f9d58" />
      <circle cx="463.500" cy="243.500" r="2" fill="#e6ef7d" stroke="#b5bd4a" />
      <path d="M596 329h2" stroke="#fff" strokeWidth="2" />
      {/* ucs */}
      <path d="M306.500 640v39H346M303.500 675.500h6v7h-6z" stroke="#d4d7da" strokeWidth="1" />
      <g fill="#c9cdd1" stroke="none" fontFamily="Lato, sans-serif" fontWeight="300" fontSize="16">
        <text x="307" y="636">Y</text>
        <text x="349" y="679">X</text>
      </g>
    </svg>
  );
}

function ViewCube() {
  return (
    <svg viewBox="0 0 126 152" className="absolute top-5 right-0 h-[152px] w-[126px]" fontFamily="'Liberation Sans', sans-serif" fontWeight="bold" textAnchor="middle">
      <circle cx="61" cy="63" r="51" fill="none" stroke="#424953" strokeWidth="12" />
      <path d="M40 43h41v41H40z" fill="#8b8d90" />
      <path d="M49 51h23v25H49z" fill="#84868a" />
      <g fontSize="18" fill="#a7abb0">
        <text x="61" y="16">N</text>
        <text x="61" y="123">S</text>
        <text x="0" y="6" transform="translate(8 63) rotate(180)">E</text>
        <text x="0" y="6" transform="translate(114 63) rotate(180)">W</text>
      </g>
      <text x="60" y="67" fontSize="11" fontFamily="'Roboto Condensed', Roboto, sans-serif" fill="#43464a">BOTTOM</text>
      <rect x="42" y="134" width="38" height="14" rx="3" fill="#8f959b" />
      <text x="54" y="144" fontSize="8" fontWeight="normal" fill="#5a5f65">WCS</text>
    </svg>
  );
}

function Viewport() {
  return (
    <main className="relative mb-px min-w-0 flex-1 overflow-hidden border-r border-b border-l border-[#e6e6e6] bg-[#20272f]">
      <Drawing />
      <div className="absolute top-[3px] left-1 flex text-[#e2e4e6]">
        <button type="button">[−]</button>
        <button type="button">[Top]</button>
        <button type="button">[2D Wireframe]</button>
      </div>
      <svg viewBox="0 0 42 10" className="absolute top-1.5 right-2 h-2.5 w-[42px]" fill="none" stroke="#e6e8ea" strokeWidth="1.500">
        <path d="M1 7.500h8M18 4h4.500v4.500H18zM20 2h5v5" />
        <path d="m34 2 6 6M40 2l-6 6" />
      </svg>
      <ViewCube />
      <form className="absolute bottom-0 left-1/2 flex h-5 w-[254px] -translate-x-1/2 bg-[#b5b9bc]">
        <div className="flex w-[43px] shrink-0 items-center justify-between bg-[#44494f] pr-1 pl-0.5">
          <span className="h-4 w-1 border-x border-dotted border-[#aaa]" />
          <button type="button" aria-label="Close command line">
            <svg viewBox="0 0 8 8" className="h-2 w-2" stroke="#ccc" strokeWidth="2">
              <path d="m1 1 6 6M7 1 1 7" />
            </svg>
          </button>
          <button type="button" aria-label="Customize command line">
            <svg viewBox="0 0 12 12" className="h-3 w-3" fill="none" stroke="#ccc" strokeWidth="2">
              <path d="m5 5 6 6" />
              <path d="M3 .5 4 3 3 4 .5 3C0 6 3 7.500 5 6.500S7 1 3 .5z" fill="#ccc" stroke="none" />
            </svg>
          </button>
        </div>
        <span className="mt-1 ml-1 h-3 w-3 shrink-0 border border-[#777] bg-[#9da1a4]">
          <svg viewBox="0 0 10 10" className="h-2.5 w-2.5" fill="none" stroke="#444">
            <path d="m2 2 3 3-3 3M6 8h3" />
          </svg>
        </span>
        <Caret className="mt-2 ml-[3px] fill-[#777]" />
        <input
          type="text"
          aria-label="Command"
          placeholder="Type a command"
          className="ml-[5px] min-w-0 flex-1 bg-transparent font-['Liberation_Mono',monospace] text-[9px] text-[#333] italic placeholder:text-[#6d7174]"
        />
        <Caret className="mt-2 mr-1 rotate-180 fill-black" />
      </form>
    </main>
  );
}

const modes = ["infer", "snap", "grid", "ortho", "polar", "osnap", "osnap3d", "otrack", "ducs", "dyn", "lwt", "tpy", "quickProps", "cycling", "plus"];

function StatusButtons({ names, wide }: { names: string[]; wide?: boolean }) {
  return (
    <div className={clsx("grid h-full auto-cols-fr grid-flow-col bg-linear-to-b from-[#b8b8b8] to-[#9d9d9d]", wide && "w-[264px]")}>
      {names.map((name) => (
        <button key={name} type="button" aria-label={name} className="flex items-center justify-center border-r border-[#787878] px-px">
          <Icon name={name} />
        </button>
      ))}
    </div>
  );
}

function StatusBar() {
  return (
    <footer className="flex h-[18px] shrink-0 items-center bg-linear-to-b from-[#8e8e8e] to-[#7a7a7a] text-[#111]">
      <output className="w-[187px] shrink-0 pl-[9px] whitespace-nowrap">688921.9433, 336852.3323, 0.0000</output>
      <StatusButtons names={modes} wide />
      <div className="flex-1" />
      <button type="button" className="h-full border-l border-[#777] bg-[#a3a3a3] px-0.5">MODEL</button>
      <StatusButtons names={["model", "layout", "quickLayout", "quickDrawing"]} />
      <button type="button" className="ml-2.5 flex h-full items-center gap-1 bg-[#a9a9a9] px-1">
        <Icon name="scaleA" size="sm" />
        1:1_1
        <Caret className="fill-black" />
      </button>
      <StatusButtons names={["scaleSpark", "scaleDim"]} />
      <div className="ml-1">
        <StatusButtons names={["gear", "lockOpen", "hardware"]} />
      </div>
      <div className="flex h-4 w-10 items-center justify-around border border-[#b5b5b5] bg-[#8d8d86]">
        <Icon name="tray" size="sm" />
        <Icon name="bulb" size="sm" />
      </div>
      <button type="button" aria-label="Status bar menu" className="flex h-full w-3 items-center justify-center">
        <Caret className="fill-black" />
      </button>
      <StatusButtons names={["window"]} />
      <svg viewBox="0 0 10 10" className="mt-1 ml-0.5 h-2.5 w-2.5 shrink-0" fill="#ccc">
        <path d="M8 0h2v2H8zM8 4h2v2H8zM4 4h2v2H4zM8 8h2v2H8zM4 8h2v2H4zM0 8h2v2H0z" />
      </svg>
    </footer>
  );
}

export default function App() {
  return (
    <div className="flex h-screen flex-col overflow-hidden border-t border-[#5d6778] bg-linear-to-r from-[#c9d0dc] via-[#d9dfec] to-[#c9d0dc] px-[7px] pb-1.5 font-['Roboto_Condensed','Roboto',sans-serif] text-[11px] leading-4">
      <header className="-mt-px flex shrink-0">
        <button
          type="button"
          aria-label="Application menu"
          className="mt-[6px] flex h-[34px] w-8 shrink-0 flex-col items-end border border-[#444] bg-linear-to-b from-[#d2d2d2] to-[#7a7a7a] pr-0.5 text-[9px] leading-2 font-bold text-[#222]"
        >
          <span className="flex items-center">
            <svg viewBox="0 0 24 24" className="mt-0.5 h-[23px] w-[22px]">
              <path d="M9 1h5l5 18-6 3z" fill="#c98ad6" />
              <path d="M9 1 3 20l5-1 4-6z" fill="#7d3a90" />
              <path d="m10 2-2 15 5 4 5-4z" fill="#e3bdea" />
              <path d="m2 20 9-6 11 3-8 6z" fill="#a85fbb" />
              <path d="m9 18 4-3 5 2-4 3z" fill="#6d2f80" />
            </svg>
            <Caret />
          </span>
          C3D
        </button>
        <div className="min-w-0 flex-1">
          <TitleBar />
          <TabRow />
        </div>
      </header>
      <Ribbon />
      <div className="flex min-h-0 flex-1 bg-[#636363] pt-[5px]">
        <Toolspace />
        <Viewport />
      </div>
      <StatusBar />
    </div>
  );
}
